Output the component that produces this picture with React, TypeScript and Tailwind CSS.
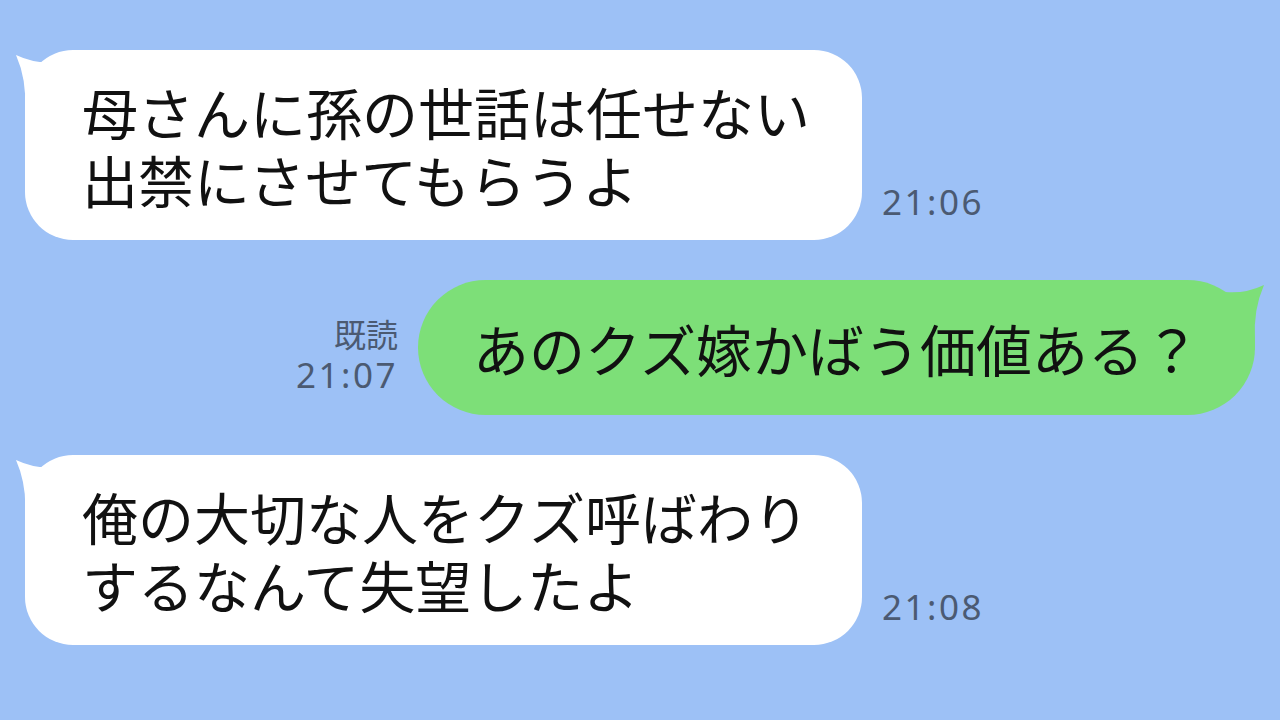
import React from "react";

const jp = { fontFamily: '"Noto Sans CJK JP", "Noto Sans", sans-serif' };

function LeftTail() {
  return (
    <svg className="absolute left-[-10px] top-0" width="70" height="70" viewBox="0 0 70 70">
      <path d="M1 5 Q 20 14 40 12 L 70 12 L 70 70 L 10 70 L 10 60 Q 12 30 1 5 Z" fill="#ffffff" />
    </svg>
  );
}

function RightTail() {
  return (
    <svg className="absolute right-[-10px] top-0" width="70" height="70" viewBox="0 0 70 70">
      <path d="M69 5 Q 50 14 30 12 L 0 12 L 0 70 L 60 70 L 60 60 Q 58 30 69 5 Z" fill="#7ddf78" />
    </svg>
  );
}

function Time({ t }: { t: string }) {
  return (
    <div className="text-[35px] leading-[40px] tracking-[2.5px] text-[#4b5a72]" style={{ fontFamily: '"Noto Sans", sans-serif' }}>
      {t}
    </div>
  );
}

function Incoming({ lines, time }: { lines: string[]; time: string }) {
  return (
    <div className="flex items-end gap-[20px]">
      <div className="relative w-[837px] h-[190px] bg-white rounded-[48px] px-[57px] flex flex-col justify-center">
        <LeftTail />
        <div className="relative text-[56px] leading-[68px] text-[#111]" style={jp}>
          {lines.map((l) => (
            <div key={l} className="whitespace-nowrap">{l}</div>
          ))}
        </div>
      </div>
      <div className="mb-[18px]">
        <Time t={time} />
      </div>
    </div>
  );
}

export default function App() {
  return (
    <div className="w-[1280px] h-[720px] overflow-hidden bg-[#9dc1f6] px-[25px] pt-[50px] flex flex-col gap-[40px]">
      <Incoming lines={["母さんに孫の世話は任せない", "出禁にさせてもらうよ"]} time="21:06" />

      <div className="flex justify-end items-end gap-[20px]">
        <div className="mb-[20px] flex flex-col items-end">
          <div className="text-[32px] leading-[44px] text-[#4b5a72]" style={jp}>既読</div>
          <Time t="21:07" />
        </div>
        <div className="relative w-[837px] h-[135px] bg-[#7ddf78] rounded-full pl-[55px] flex items-center">
          <RightTail />
          <div className="relative text-[56px] leading-[68px] text-[#111] whitespace-nowrap" style={jp}>
            あのクズ嫁かばう価値ある？
          </div>
        </div>
      </div>

      <Incoming lines={["俺の大切な人をクズ呼ばわり", "するなんて失望したよ"]} time="21:08" />
    </div>
  );
}
